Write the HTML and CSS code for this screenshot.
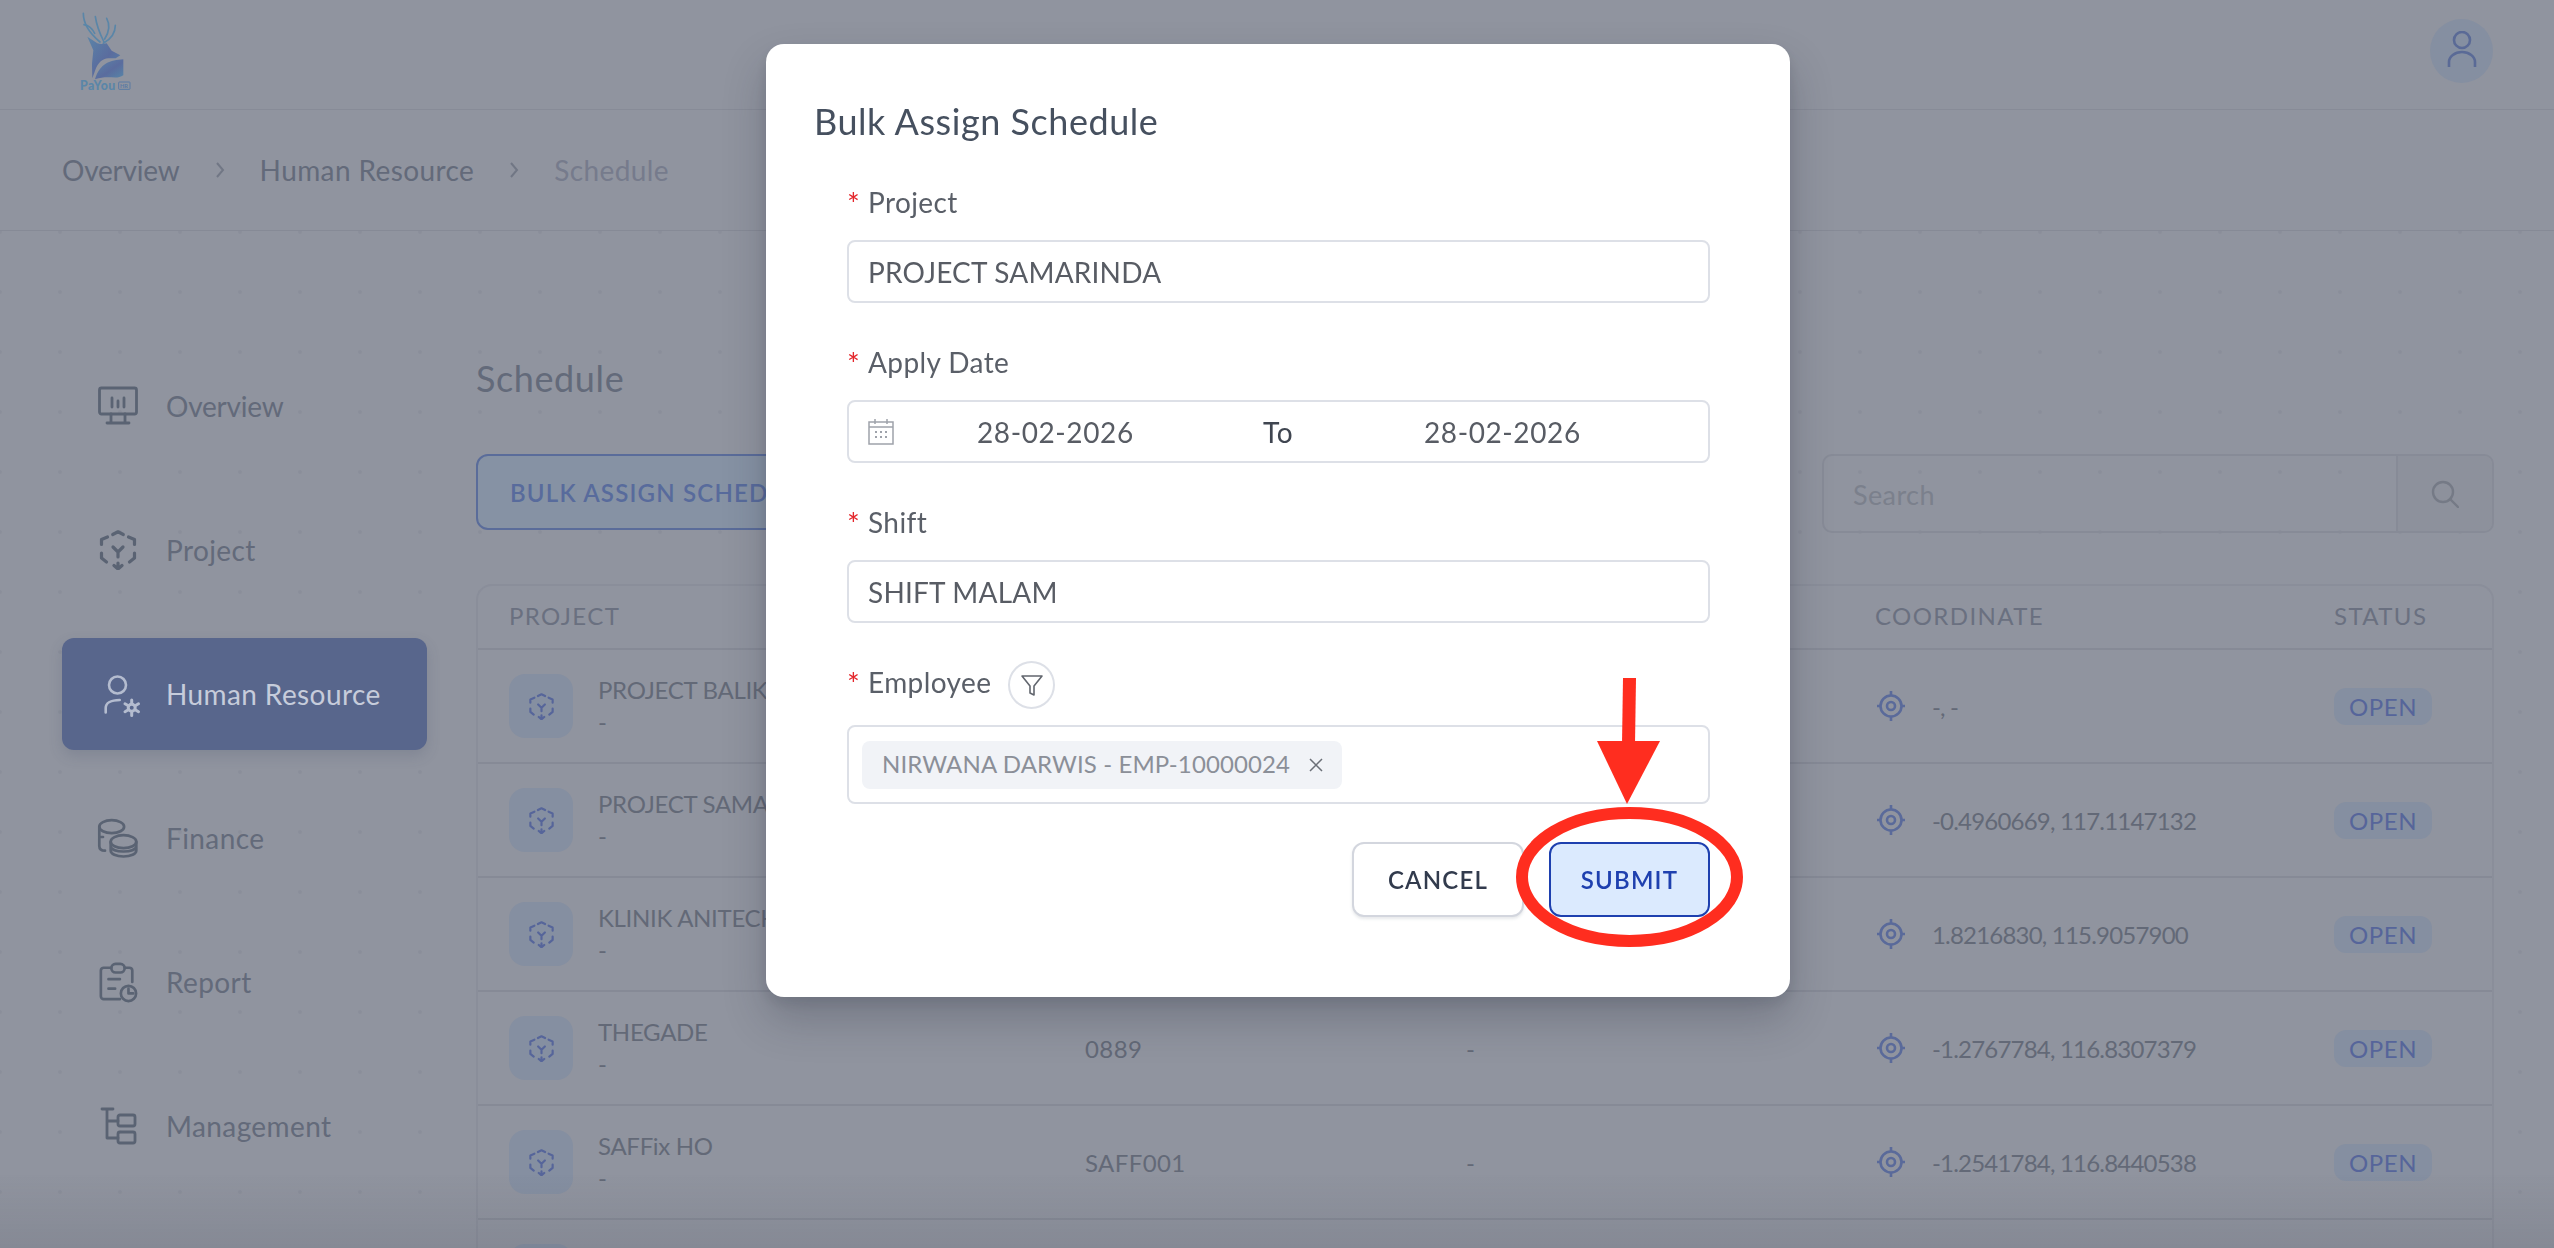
FILE: index.html
```html
<!DOCTYPE html>
<html lang="en">
<head>
<meta charset="utf-8">
<title>Bulk Assign Schedule</title>
<link rel="stylesheet" href="styles.css">
</head>
<body>
<svg class="defs" width="0" height="0" aria-hidden="true">
  <defs>
    <symbol id="i-project" viewBox="0 0 40 40">
      <g fill="none" stroke="currentColor" stroke-width="3.200" stroke-linecap="round" stroke-linejoin="round">
        <path d="M14.700 4.500 20 1.800l5.300 2.700"/>
        <path d="M3.500 14.500V9.500l6-2.500"/><path d="M36.500 14.500V9.500l-6-2.500"/>
        <path d="M3.500 23v5l5 4"/><path d="M36.500 23v5l-5 4"/>
        <path d="M15 17l5 5 5-5M20 22v5"/>
        <path d="M20 33v5.500M16 35.500l4 3.500 4-3.500"/>
      </g>
    </symbol>
    <symbol id="i-target" viewBox="0 0 28 30">
      <g fill="none" stroke="currentColor" stroke-width="2.600">
        <ellipse cx="14" cy="15" rx="10.500" ry="10.500"/>
        <ellipse cx="14" cy="15" rx="4" ry="4"/>
        <path d="M14 0v5M14 25v5M0 15h4M24 15h4"/>
      </g>
    </symbol>
  </defs>
</svg>

<div class="page">
  <header class="topbar">
    <svg class="logo" viewBox="0 0 300 300" role="img" aria-label="PaYou HR">
      <defs>
        <linearGradient id="deer" x1="0" y1="0" x2="1" y2="1">
          <stop offset="0" stop-color="#5b84a8"/>
          <stop offset=".55" stop-color="#5a6c9e"/>
          <stop offset="1" stop-color="#5787a8"/>
        </linearGradient>
      </defs>
      <g fill="none" stroke="#5a86a8" stroke-width="5" stroke-linecap="round">
        <path d="M70 40c0 32 16 58 50 86"/>
        <path d="M72 74c12 2 24 10 32 26"/>
        <path d="M106 50c4 28 14 52 26 76"/>
        <path d="M140 55c10 18 8 40-6 62"/>
        <path d="M166 76c0 22-14 42-36 54"/>
      </g>
      <path fill="url(#deer)" d="M82 110l30 20c10 4 20 2 28 0l15 22 26 14-14 9h-22c-18 0-32 16-38 32l-10 28-1-38c0-10 2-24 4-46z"/>
      <path fill="url(#deer)" d="M105 238c15-48 45-58 85-60v48c-20 15-45-2-85 12z"/>
      <text class="logo-word" x="60" y="270">PaYou</text>
      <rect x="176" y="246" width="34" height="22" rx="2" fill="none" stroke="#5a7ba4" stroke-width="3"/>
      <text class="logo-hr" x="180" y="264">HR</text>
    </svg>
    <div class="avatar">
      <svg viewBox="0 0 34 40" width="34" height="40" fill="none" stroke="currentColor" stroke-width="2.600">
        <circle cx="17" cy="9" r="8"/>
        <path d="M4 36V31a13 10 0 0 1 26 0v5"/>
      </svg>
    </div>
  </header>

  <nav class="crumbs">
    <span class="tight">Overview</span>
    <svg class="sep" viewBox="0 0 10 16" width="10" height="16"><path d="M2 1l6 7-6 7" fill="none" stroke="currentColor" stroke-width="2"/></svg>
    <span>Human Resource</span>
    <svg class="sep" viewBox="0 0 10 16" width="10" height="16"><path d="M2 1l6 7-6 7" fill="none" stroke="currentColor" stroke-width="2"/></svg>
    <span class="crumb-last">Schedule</span>
  </nav>

  <main class="main">
    <aside class="side">
      <a class="nav-item">
        <svg class="nav-icon" viewBox="0 0 40 40" fill="none" stroke="currentColor" stroke-width="2.800" stroke-linecap="round" stroke-linejoin="round">
          <rect x="1.500" y="2" width="37" height="26" rx="2"/>
          <path d="M14 12v9M20 15v6M26 12v9M13 28v8M27 28v8M9 37h22"/>
        </svg>
        <span class="tight">Overview</span>
      </a>
      <a class="nav-item">
        <svg class="nav-icon"><use href="#i-project"/></svg>
        <span>Project</span>
      </a>
      <a class="nav-item nav-active">
        <svg class="nav-icon hr-icon" viewBox="0 0 40 40" fill="none" stroke="currentColor" stroke-width="2.600" stroke-linecap="round" stroke-linejoin="round">
          <circle cx="19.500" cy="11" r="8.500"/>
          <path d="M7.700 38.500V34c0-4.500 4.500-8 14-8"/>
          <circle cx="33.700" cy="33.700" r="3.500" stroke-width="3"/>
          <path d="M33.700 26v3M33.700 38.500v3M27 29.800l2.500 1.500M38 36.200l2.500 1.500M27 37.700l2.500-1.500M38 31.300l2.500-1.500" stroke-width="3"/>
        </svg>
        <span>Human Resource</span>
      </a>
      <a class="nav-item">
        <svg class="nav-icon" viewBox="0 0 40 40" fill="none" stroke="currentColor" stroke-width="2.700" stroke-linecap="round" stroke-linejoin="round">
          <ellipse cx="13.700" cy="8.700" rx="12.400" ry="6.500"/>
          <path d="M1.300 9V28c0 3 1.700 4.700 5.700 4.700M1.300 19H5"/>
          <ellipse cx="25.500" cy="23.700" rx="12.800" ry="6.500"/>
          <path d="M12.700 24v8.500c0 3.500 5.500 6 12.800 6s12.800-2.500 12.800-6V24M12.700 29c1 2.500 6 4.500 12.800 4.500S37.300 31.500 38.300 29"/>
        </svg>
        <span>Finance</span>
      </a>
      <a class="nav-item">
        <svg class="nav-icon" viewBox="0 0 40 42" fill="none" stroke="currentColor" stroke-width="2.800" stroke-linecap="round" stroke-linejoin="round">
          <path d="M13 6H5a3 3 0 0 0-3 3v27a3 3 0 0 0 3 3h17M27 6h5a3 3 0 0 1 3 3v12"/>
          <rect x="13" y="2" width="14" height="9" rx="4.500"/>
          <path d="M10 18h12M10 28h7"/>
          <circle cx="31" cy="33" r="8"/>
          <path d="M31 28v5h5"/>
        </svg>
        <span>Report</span>
      </a>
      <a class="nav-item">
        <svg class="nav-icon" viewBox="0 0 40 40" fill="none" stroke="currentColor" stroke-width="2.800" stroke-linecap="round" stroke-linejoin="round">
          <path d="M4 3h11M9 3v29h11M9 15h11"/>
          <rect x="20" y="9" width="17" height="11" rx="2"/>
          <rect x="20" y="26" width="17" height="11" rx="2"/>
        </svg>
        <span>Management</span>
      </a>
    </aside>

    <section class="content">
      <h1 class="title">Schedule</h1>
      <div class="toolbar">
        <button class="btn-bulk">BULK ASSIGN SCHEDULE</button>
        <div class="search">
          <span class="search-text">Search</span>
          <span class="search-btn">
            <svg viewBox="0 0 28 28" width="28" height="28" fill="none" stroke="currentColor" stroke-width="2.400" stroke-linecap="round"><circle cx="12" cy="12" r="10"/><path d="M19 19l8 8"/></svg>
          </span>
        </div>
      </div>

      <div class="table">
        <div class="row row-head">
          <div class="cell cell-first">PROJECT</div><div class="cell">CODE</div><div class="cell">ADDRESS</div><div class="cell">COORDINATE</div><div class="cell">STATUS</div>
        </div>
        <div class="row">
          <div class="cell cell-first cell-project"><span class="thumb"><svg><use href="#i-project"/></svg></span><div><div class="name">PROJECT BALIKPAPAN</div><div class="sub">-</div></div></div>
          <div class="cell">0887</div><div class="cell">-</div>
          <div class="cell cell-coord"><svg class="target"><use href="#i-target"/></svg>-, -</div>
          <div class="cell"><span class="pill">OPEN</span></div>
        </div>
        <div class="row">
          <div class="cell cell-first cell-project"><span class="thumb"><svg><use href="#i-project"/></svg></span><div><div class="name">PROJECT SAMARINDA</div><div class="sub">-</div></div></div>
          <div class="cell">0888</div><div class="cell">-</div>
          <div class="cell cell-coord"><svg class="target"><use href="#i-target"/></svg>-0.4960669, 117.1147132</div>
          <div class="cell"><span class="pill">OPEN</span></div>
        </div>
        <div class="row">
          <div class="cell cell-first cell-project"><span class="thumb"><svg><use href="#i-project"/></svg></span><div><div class="name">KLINIK ANITECH</div><div class="sub">-</div></div></div>
          <div class="cell">0890</div><div class="cell">-</div>
          <div class="cell cell-coord"><svg class="target"><use href="#i-target"/></svg>1.8216830, 115.9057900</div>
          <div class="cell"><span class="pill">OPEN</span></div>
        </div>
        <div class="row">
          <div class="cell cell-first cell-project"><span class="thumb"><svg><use href="#i-project"/></svg></span><div><div class="name">THEGADE</div><div class="sub">-</div></div></div>
          <div class="cell">0889</div><div class="cell">-</div>
          <div class="cell cell-coord"><svg class="target"><use href="#i-target"/></svg>-1.2767784, 116.8307379</div>
          <div class="cell"><span class="pill">OPEN</span></div>
        </div>
        <div class="row">
          <div class="cell cell-first cell-project"><span class="thumb"><svg><use href="#i-project"/></svg></span><div><div class="name">SAFFix HO</div><div class="sub">-</div></div></div>
          <div class="cell">SAFF001</div><div class="cell">-</div>
          <div class="cell cell-coord"><svg class="target"><use href="#i-target"/></svg>-1.2541784, 116.8440538</div>
          <div class="cell"><span class="pill">OPEN</span></div>
        </div>
        <div class="row">
          <div class="cell cell-first cell-project"><span class="thumb"><svg><use href="#i-project"/></svg></span></div>
        </div>
      </div>
    </section>
  </main>
</div>

<div class="scrim">
  <div class="modal">
    <h2 class="modal-title">Bulk Assign Schedule</h2>
    <form class="form">
      <div class="field">
        <div class="label"><span class="req">*</span><span class="label-text">Project</span></div>
        <div class="input">PROJECT SAMARINDA</div>
      </div>
      <div class="field">
        <div class="label"><span class="req">*</span><span class="label-text">Apply Date</span></div>
        <div class="input input-date">
          <svg class="cal" viewBox="0 0 26 26" width="26" height="26" fill="none" stroke="currentColor" stroke-width="1.500">
            <rect x="1" y="3" width="24" height="22"/>
            <path d="M1 8h24M7 0v5M19 0v5"/>
            <path d="M7 13h2M12 13h2M17 13h2M7 18h2M12 18h2M17 18h2" stroke-width="2"/>
          </svg>
          <span class="date-from">28-02-2026</span>
          <span class="date-to">To</span>
          <span>28-02-2026</span>
        </div>
      </div>
      <div class="field">
        <div class="label"><span class="req">*</span><span class="label-text">Shift</span></div>
        <div class="input">SHIFT MALAM</div>
      </div>
      <div class="field field-emp">
        <div class="label label-emp"><span class="req">*</span><span class="label-text">Employee</span>
          <span class="filter">
            <svg viewBox="0 0 24 24" width="24" height="24" fill="none" stroke="currentColor" stroke-width="1.600" stroke-linejoin="round"><path d="M2 3h20l-8 10v9l-4-2v-7z"/></svg>
          </span>
        </div>
        <div class="input input-tags">
          <span class="chip"><span class="chip-text">NIRWANA DARWIS - EMP-10000024</span>
            <svg viewBox="0 0 16 16" width="16" height="16" fill="none" stroke="currentColor" stroke-width="1.500"><path d="M2 2l12 12M14 2L2 14"/></svg>
          </span>
        </div>
      </div>
      <div class="actions">
        <button type="button" class="btn btn-cancel">CANCEL</button>
        <button type="button" class="btn btn-submit">SUBMIT</button>
      </div>
    </form>
  </div>
  <svg class="markup" viewBox="0 0 2554 1248" width="2554" height="1248" aria-hidden="true">
    <ellipse cx="1629.500" cy="877" rx="107.500" ry="64" fill="none" stroke="#ff2d1f" stroke-width="12"/>
    <path d="M1623 678h13l-1 66h-13z" fill="#ff2d1f"/>
    <path d="M1597 741l63 0-33 63z" fill="#ff2d1f"/>
  </svg>
</div>
</body>
</html>
```
FILE: styles.css
```css
* { box-sizing: border-box; }
html, body { margin: 0; height: 100%; }
body {
  width: 2554px;
  height: 1248px;
  overflow: hidden;
  background: #90949f;
  color: #636a7a;
  font-family: "Lato", "Liberation Sans", sans-serif;
  font-size: 28px;
  letter-spacing: .4px;
}
.defs { position: absolute; }
.page { width: 100%; height: 100%; overflow: hidden; }
.tight { letter-spacing: -.2px; }

/* top bar */
.topbar {
  height: 110px;
  border-bottom: 1px solid #878b97;
  padding: 0 61px 0 60px;
  display: flex;
  justify-content: space-between;
  align-items: flex-start;
}
.logo { width: 100px; height: 100px; display: block; }
.logo-word { font: 900 37px "Lato", sans-serif; fill: #5a86a8; letter-spacing: 1.500px; }
.logo-hr { font: 700 17px "Lato", sans-serif; fill: #5a7ba4; letter-spacing: 0; }
.avatar {
  width: 63px;
  height: 64px;
  margin-top: 19px;
  border-radius: 50%;
  background: #858fa1;
  color: #5a6a96;
  display: flex;
  align-items: center;
  justify-content: center;
}

/* breadcrumb */
.crumbs {
  height: 121px;
  border-bottom: 1px solid #868a96;
  padding: 0 0 0 62px;
  display: flex;
  align-items: center;
  gap: 35px;
  color: #636a7a;
}
.crumb-last { color: #767b8c; }
.sep { color: #717785; }

/* main area */
.main {
  height: 1020px;
  display: flex;
  background-color: #90949f;
  background-image: radial-gradient(circle at 30px 30px, #8a8e9a 1.2px, rgba(138,142,154,0) 2.600px);
  background-size: 60px 60px;
  background-position: -30px -29px;
}
.side {
  width: 476px;
  flex: none;
  padding: 119px 49px 0 62px;
  display: flex;
  flex-direction: column;
  gap: 32px;
}
.nav-item {
  height: 112px;
  flex: none;
  padding-left: 36px;
  display: flex;
  align-items: center;
  gap: 28px;
  border-radius: 12px;
  color: #636a7a;
}
.nav-icon { width: 40px; height: 40px; flex: none; overflow: visible; color: #5a6373; }
.nav-active {
  background: #58668c;
  color: #c6ccdb;
  box-shadow: 0 6px 14px rgba(60,70,100,.18);
}
.hr-icon { color: #b4bccf; }

.content { width: 2018px; flex: none; }
.title {
  margin: 122px 0 0;
  height: 50px;
  line-height: 50px;
  font-size: 36px;
  font-weight: 400;
  letter-spacing: .6px;
  color: #636a7a;
}
.toolbar {
  margin-top: 51px;
  display: flex;
  justify-content: space-between;
  align-items: flex-start;
}
.btn-bulk {
  height: 76px;
  width: 500px;
  padding: 0 0 0 32px;
  text-align: left;
  border: 2px solid #5a6c9a;
  border-radius: 12px;
  background: #8692a4;
  color: #586b9c;
  font: 600 24px "Lato", sans-serif;
  letter-spacing: 1.200px;
}
.search {
  width: 672px;
  height: 79px;
  border: 2px solid #878b97;
  border-radius: 10px;
  display: flex;
}
.search-text {
  flex: 1;
  padding-left: 29px;
  line-height: 77px;
  color: #7b808c;
  font-size: 27px;
}
.search-btn {
  width: 96px;
  flex: none;
  border-left: 2px solid #878b97;
  background: #8d919c;
  border-radius: 0 8px 8px 0;
  color: #757a86;
  display: flex;
  align-items: center;
  justify-content: center;
}

/* table */
.table {
  margin-top: 51px;
  background: #90949f;
  border: 2px solid #8a8e9a;
  border-bottom: 0;
  border-radius: 16px 16px 0 0;
  font-size: 24px;
  color: #636977;
}
.row {
  height: 114px;
  display: grid;
  grid-template-columns: 574px 381px 409px 459px 1fr;
  align-items: center;
  border-bottom: 2px solid #868a96;
}
.row-head {
  height: 64px;
  padding-bottom: 3px;
  color: #6a7080;
  letter-spacing: 1.400px;
}
.cell { padding-left: 33px; white-space: nowrap; }
.cell-first { padding-left: 31px; }
.cell-project { display: flex; align-items: center; gap: 25px; }
.thumb {
  width: 64px;
  height: 64px;
  border-radius: 16px;
  background: #858fa1;
  color: #56659a;
  display: flex;
  align-items: center;
  justify-content: center;
  flex: none;
}
.thumb svg { width: 27px; height: 27px; }
.name { line-height: 32px; letter-spacing: -.3px; }
.sub { line-height: 32px; }
.cell-coord { display: flex; align-items: center; gap: 27px; padding-left: 35px; letter-spacing: -.8px; }
.target { width: 28px; height: 30px; color: #5a6a9a; flex: none; }
.pill {
  display: inline-block;
  width: 98px;
  height: 37px;
  line-height: 37px;
  text-align: center;
  border-radius: 12px;
  background: #858fa1;
  color: #56659a;
  font-size: 24px;
  letter-spacing: .6px;
}

/* modal */
.scrim {
  position: fixed;
  inset: 0;
  padding: 44px 0 0 2px;
  display: flex;
  justify-content: center;
  align-items: flex-start;
  background: linear-gradient(to bottom, rgba(40,45,60,0) 94%, rgba(40,45,60,.10));
}
.modal {
  width: 1024px;
  height: 953px;
  background: #fff;
  border-radius: 18px;
  padding: 57px 80px 0 48px;
  box-shadow: 0 22px 44px rgba(30,35,50,.24), 0 6px 14px rgba(30,35,50,.10);
  color: #5a5f68;
}
.modal-title {
  margin: 0 0 1px;
  height: 40px;
  line-height: 40px;
  font-size: 36px;
  font-weight: 400;
  letter-spacing: .55px;
  color: #46505f;
}
.form { padding: 41px 0 0 33px; }
.field { margin-bottom: 40px; }
.field-emp { margin: -2px 0 38px; }
.label {
  height: 40px;
  margin-bottom: 17px;
  display: flex;
  align-items: center;
  color: #5a5f68;
}
.label-text { margin-bottom: 3px; }
.label-emp { height: 48px; margin-bottom: 16px; }
.label-emp .label-text { margin-bottom: 7px; }
.req { width: 21px; color: #e4262b; font-size: 30px; line-height: 1; flex: none; }
.label-emp .req { margin-bottom: 4px; }
.input {
  height: 63px;
  border: 2px solid #dde0e7;
  border-radius: 8px;
  padding-left: 19px;
  display: flex;
  align-items: center;
  color: #585c64;
  letter-spacing: .2px;
}
.input-date { letter-spacing: .6px; }
.cal { color: #9ea2aa; flex: none; }
.date-from { margin-left: 83px; width: 286px; }
.date-to { width: 161px; color: #3f4550; }
.filter {
  width: 47px;
  height: 48px;
  margin-left: 17px;
  border: 2px solid #dde0e7;
  border-radius: 50%;
  color: #62666e;
  display: flex;
  align-items: center;
  justify-content: center;
}
.input-tags { height: 79px; padding-left: 13px; }
.chip {
  height: 48px;
  padding: 0 18px 0 20px;
  border-radius: 8px;
  background: #f1f3f7;
  color: #8b8f98;
  font-size: 24px;
  letter-spacing: .12px;
  display: flex;
  align-items: center;
  gap: 18px;
}
.chip-text { margin-bottom: 3px; }
.chip svg { color: #6b6f77; }
.actions { display: flex; justify-content: flex-end; gap: 25px; }
.btn {
  height: 75px;
  padding: 0;
  border-radius: 12px;
  font: 600 24px "Lato", sans-serif;
  letter-spacing: 1.200px;
}
.btn-cancel {
  width: 172px;
  background: #fff;
  border: 2px solid #d3d6de;
  color: #323b4d;
  box-shadow: 0 2px 3px rgba(60,70,90,.12);
}
.btn-submit {
  width: 161px;
  background: #dbeafe;
  border: 2px solid #1e40af;
  color: #1e40af;
}
.markup { position: absolute; left: 0; top: 0; pointer-events: none; }
```
